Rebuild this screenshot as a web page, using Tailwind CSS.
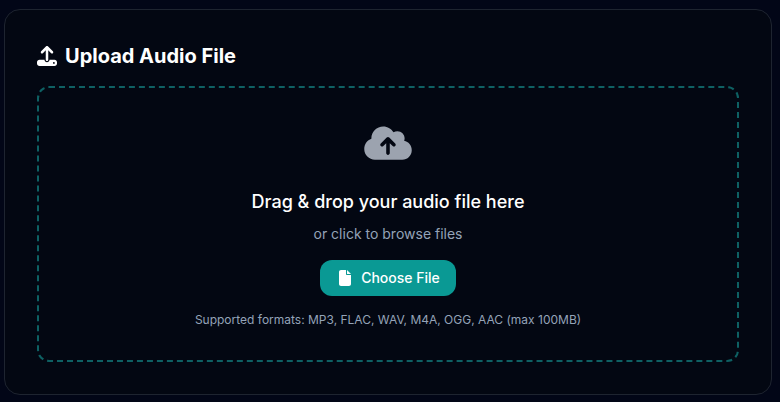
<!DOCTYPE html>
<html lang="en">
<head>
  <meta charset="UTF-8" />
  <title>Upload Audio File</title>
  <script src="https://cdn.jsdelivr.net/npm/@tailwindcss/browser@4"></script>
</head>
<body class="bg-[#020617] h-[402px] overflow-hidden font-['Inter',sans-serif]">
  <div class="pl-1 pr-2 pt-[9px]">
    <div class="h-[386px] rounded-2xl border border-[#1e2430] bg-[#030712] px-8 pt-[32px]">
      <!-- Title -->
      <h2 class="flex items-center gap-2 text-xl font-bold leading-7 text-white">
        <svg class="w-5 h-5" viewBox="0 0 512 512" fill="currentColor"><path d="M288 109.3V352c0 17.7-14.3 32-32 32s-32-14.3-32-32V109.3l-73.4 73.4c-12.5 12.5-32.8 12.5-45.3 0s-12.5-32.8 0-45.3l128-128c12.5-12.5 32.8-12.5 45.3 0l128 128c12.5 12.5 12.5 32.8 0 45.3s-32.8 12.5-45.3 0L288 109.3zM64 352H192c0 35.3 28.7 64 64 64s64-28.7 64-64H448c35.3 0 64 28.7 64 64v32c0 35.3-28.7 64-64 64H64c-35.3 0-64-28.7-64-64V416c0-35.3 28.7-64 64-64zM432 456a24 24 0 1 0 0-48 24 24 0 1 0 0 48z"/></svg>
        Upload Audio File
      </h2>

      <!-- Drop zone -->
      <div class="mt-4 h-[276px] rounded-xl border-2 border-dashed border-[#0e6063] flex flex-col items-center pt-[36px]">
        <svg class="w-12 h-[38px] text-[#9ca3af]" viewBox="0 0 640 512" fill="currentColor"><path d="M144 480C64.5 480 0 415.5 0 336c0-62.8 40.2-116.2 96.2-135.9c-.1-2.7-.2-5.4-.2-8.1c0-88.4 71.6-160 160-160c59.3 0 111 32.2 138.7 80.2C409.9 102 428.3 96 448 96c53 0 96 43 96 96c0 12.2-2.3 23.8-6.4 34.6C596 238.4 640 290.1 640 352c0 70.7-57.3 128-128 128H144zm79-217c-9.4 9.4-9.4 24.6 0 33.9s24.6 9.4 33.9 0l39-39V392c0 13.3 10.7 24 24 24s24-10.7 24-24V257.9l39 39c9.4 9.4 24.6 9.4 33.9 0s9.4-24.6 0-33.9l-80-80c-9.4-9.4-24.6-9.4-33.9 0l-80 80z"/></svg>
        <p class="mt-[26px] text-lg font-medium leading-7 text-white">Drag &amp; drop your audio file here</p>
        <p class="mt-[8px] text-sm leading-5 text-[#94a3b8]">or click to browse files</p>
        <button class="mt-4 w-[136px] h-9 pl-[3px] rounded-xl bg-[#0a9994] flex items-center justify-center gap-[10px] text-sm font-medium text-white">
          <svg class="w-3 h-4" viewBox="0 0 384 512" fill="currentColor"><path d="M0 64C0 28.7 28.7 0 64 0H224V128c0 17.7 14.3 32 32 32H384V448c0 35.3-28.7 64-64 64H64c-35.3 0-64-28.7-64-64V64zm384 64H256V0L384 128z"/></svg>
          Choose File
        </button>
        <p class="mt-4 text-xs leading-4 text-[#94a3b8]">Supported formats: MP3, FLAC, WAV, M4A, OGG, AAC (max 100MB)</p>
      </div>
    </div>
  </div>
</body>
</html>
